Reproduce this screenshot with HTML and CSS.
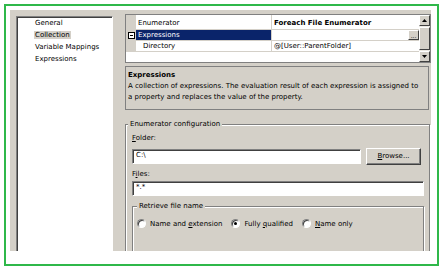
FILE: index.html
```html
<!DOCTYPE html>
<html lang="en">

<head>
    <meta charset="UTF-8">
    <title>Foreach Loop Editor - Collection</title>
    <link rel="stylesheet" href="styles.css">
</head>

<body>
    <div class="frame">
        <div class="dialog">
            <ul class="nav">
                <li>General</li>
                <li><span class="sel">Collection</span></li>
                <li>Variable Mappings</li>
                <li>Expressions</li>
            </ul>

            <div class="main">
                <div class="grid">
                    <div class="grid-rows">
                        <div class="row row-head">
                            <div class="gutter"></div>
                            <div class="cell name">Enumerator</div>
                            <div class="cell value bold">Foreach File Enumerator</div>
                        </div>
                        <div class="row">
                            <div class="gutter">
                                <svg class="toggle" width="7" height="7" viewBox="0 0 7 7">
                                    <rect x="0.5" y="0.5" width="6" height="6" fill="#fff" stroke="#000" />
                                    <path d="M2 3.5h3" stroke="#000" />
                                </svg>
                            </div>
                            <div class="cell name selected">Expressions</div>
                            <div class="cell value"><span class="ellipsis">...</span></div>
                        </div>
                        <div class="row">
                            <div class="gutter"></div>
                            <div class="cell name child">Directory</div>
                            <div class="cell value">@[User::ParentFolder]</div>
                        </div>
                    </div>
                    <div class="scrollbar">
                        <div class="sb-btn">
                            <svg width="5" height="3" viewBox="0 0 5 3"><path d="M2.5 0L5 3H0z" fill="#000" /></svg>
                        </div>
                        <div class="sb-thumb"></div>
                        <div class="sb-btn">
                            <svg width="5" height="3" viewBox="0 0 5 3"><path d="M0 0h5L2.5 3z" fill="#000" /></svg>
                        </div>
                    </div>
                </div>

                <div class="desc">
                    <div class="bold">Expressions</div>
                    <div>A collection of expressions. The evaluation result of each expression is assigned to</div>
                    <div>a property and replaces the value of the property.</div>
                </div>

                <fieldset class="group">
                    <legend>Enumerator configuration</legend>
                    <div class="field-label"><u>F</u>older:</div>
                    <div class="field-row">
                        <div class="textbox folder">C:\</div>
                        <div class="button"><u>B</u>rowse...</div>
                    </div>
                    <div class="field-label">F<u>i</u>les:</div>
                    <div class="textbox">*.*</div>

                    <fieldset class="group inner">
                        <legend>Retrieve file name</legend>
                        <div class="radios">
                            <span class="radio"></span><span class="radio-text">Name and <u>e</u>xtension</span>
                            <span class="radio checked"></span><span class="radio-text">Fully <u>q</u>ualified</span>
                            <span class="radio"></span><span class="radio-text"><u>N</u>ame only</span>
                        </div>
                    </fieldset>
                </fieldset>
            </div>
        </div>
    </div>
</body>

</html>
```

FILE: styles.css
```css
body {
    margin: 0;
    background: #fff;
    font-family: 'DejaVu Sans', sans-serif;
    font-size: 7px;
    color: #000;
}

u {
    text-decoration: underline;
}

.frame {
    box-sizing: border-box;
    width: 435px;
    height: 262px;
    margin: 4px 0 0 4px;
    padding: 4px 6px 13px 4px;
    border: 2px solid #2fb84a;
    background: #fff;
}

.dialog {
    display: flex;
    height: 241px;
    padding-left: 6px;
    background: #d4d0c8;
    overflow: hidden;
}

/* left page list */
.nav {
    list-style: none;
    box-sizing: border-box;
    width: 97px;
    height: 300px;
    margin: 6px 0 0 0;
    padding: 0 0 0 18px;
    background: #fff;
    border: 1px solid;
    border-color: #808080 #fff #fff #808080;
    box-shadow: inset 1px 1px 0 #404040;
    line-height: 12px;
}

.nav .sel {
    background: #d4d0c8;
    padding: 0 1px;
    margin-left: -1px;
}

.main {
    width: 306px;
    margin-left: 12px;
    padding-top: 4px;
}

/* property grid */
.grid {
    display: flex;
    box-sizing: border-box;
    height: 49px;
    border: 1px solid #808080;
    background: #fff;
}

.grid-rows {
    flex: 1;
}

.row {
    display: flex;
    height: 10px;
    line-height: 10px;
    border-bottom: 1px solid #d4d0c8;
}

.row-head {
    height: 14px;
    line-height: 16px;
}

.gutter {
    width: 10px;
    display: flex;
    align-items: center;
    justify-content: center;
    background: #d4d0c8;
}

.cell {
    white-space: nowrap;
    overflow: hidden;
}

.name {
    box-sizing: border-box;
    width: 136px;
    padding-left: 2px;
    border-right: 1px solid #d4d0c8;
}

.name.child {
    padding-left: 7px;
}

.name.selected {
    background: #0a246a;
    color: #fff;
}

.value {
    flex: 1;
    display: flex;
    justify-content: flex-end;
    padding-left: 2px;
}

.row-head .value,
.row:last-child .value {
    justify-content: flex-start;
}

.bold {
    font-weight: bold;
}

.ellipsis {
    box-sizing: border-box;
    width: 11px;
    height: 10px;
    line-height: 9px;
    text-align: center;
    font-size: 6px;
    background: #d4d0c8;
    border: 1px solid;
    border-color: #fff #404040 #404040 #fff;
}

.scrollbar {
    width: 11px;
    display: flex;
    flex-direction: column;
    background: #ece9e2;
}

.sb-btn,
.sb-thumb {
    box-sizing: border-box;
    background: #d4d0c8;
    border: 1px solid;
    border-color: #fff #404040 #404040 #fff;
}

.sb-btn {
    height: 11px;
    display: flex;
    align-items: center;
    justify-content: center;
}

.sb-thumb {
    height: 23px;
    margin: 1px 0;
}

/* description */
.desc {
    margin: 3px 2px 0 0;
    padding: 3px 2px 6px 2px;
    border: 1px solid #808080;
    line-height: 11px;
}

/* group boxes */
.group {
    margin: 10px 1px 0 0;
    padding: 0 5px 0 6px;
    height: 200px;
    border: 1px solid #808080;
    box-shadow: inset 1px 1px 0 #fff, 1px 1px 0 #fff;
}

.group legend {
    margin-left: -4px;
    padding: 0 2px;
    line-height: 9px;
    background: #d4d0c8;
}

.field-label {
    margin-top: 5px;
    line-height: 9px;
}

.field-row {
    display: flex;
    align-items: center;
    margin-top: 5px;
}

.textbox {
    box-sizing: border-box;
    height: 15px;
    padding-left: 3px;
    line-height: 11px;
    background: #fff;
    border: 1px solid;
    border-color: #808080 #fff #fff #808080;
    box-shadow: inset 1px 1px 0 #404040;
}

.field-label + .textbox {
    margin-top: 2px;
}

.textbox.folder {
    width: 229px;
}

.button {
    box-sizing: border-box;
    width: 55px;
    height: 17px;
    margin-left: 5px;
    line-height: 15px;
    text-align: center;
    background: #d4d0c8;
    border: 1px solid;
    border-color: #fff #404040 #404040 #fff;
    box-shadow: inset -1px -1px 0 #808080;
}

.group.inner {
    margin: 6px 0 0 0;
    padding: 0 4px;
    height: 80px;
}

.group.inner legend {
    margin-left: 0;
}

.radios {
    display: flex;
    align-items: center;
    margin-top: 8px;
}

.radio {
    box-sizing: border-box;
    width: 9px;
    height: 9px;
    border-radius: 50%;
    background: #fff;
    border: 1px solid;
    border-color: #808080 #fff #fff #808080;
    box-shadow: inset 1px 1px 0 #404040;
    display: flex;
    align-items: center;
    justify-content: center;
}

.radio.checked::after {
    content: "";
    width: 3px;
    height: 3px;
    border-radius: 50%;
    background: #000;
}

.radio-text {
    margin: 0 9px 0 4px;
}
```
